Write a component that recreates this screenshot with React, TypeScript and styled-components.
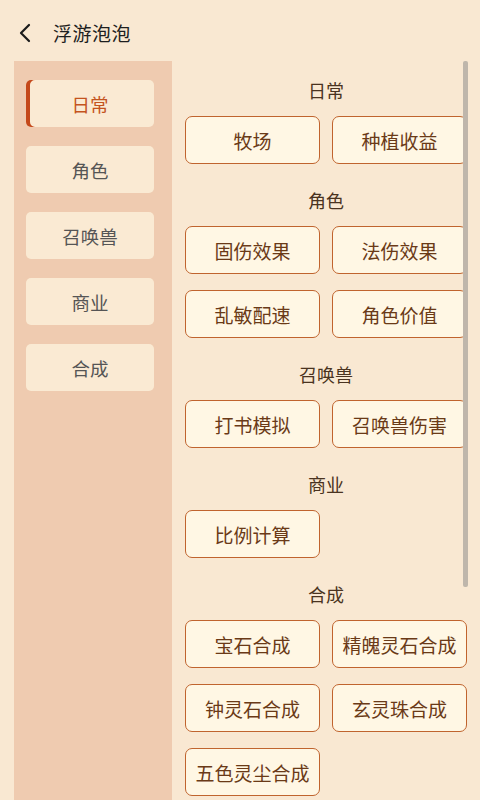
import React from "react";
import styled, { createGlobalStyle } from "styled-components";

const GlobalStyle = createGlobalStyle`
  html, body {
    margin: 0;
    padding: 0;
    background: #f9e8d2;
  }
  body {
    font-family: "Noto Sans CJK SC", "Noto Sans", sans-serif;
  }
`;

type Section = { title: string; items: string[] };

const sections: Section[] = [
  { title: "日常", items: ["牧场", "种植收益"] },
  { title: "角色", items: ["固伤效果", "法伤效果", "乱敏配速", "角色价值"] },
  { title: "召唤兽", items: ["打书模拟", "召唤兽伤害"] },
  { title: "商业", items: ["比例计算"] },
  {
    title: "合成",
    items: ["宝石合成", "精魄灵石合成", "钟灵石合成", "玄灵珠合成", "五色灵尘合成"],
  },
];

function App() {
  const [active, setActive] = React.useState(0);

  return (
    <Page>
      <GlobalStyle />
      <Header>
        <BackButton aria-label="返回">
          <svg width="14" height="20" viewBox="0 0 14 20">
            <path
              d="M11 2 L3 10 L11 18"
              fill="none"
              stroke="#1a1a1a"
              strokeWidth="2.2"
              strokeLinecap="round"
              strokeLinejoin="round"
            />
          </svg>
        </BackButton>
        <Title>浮游泡泡</Title>
      </Header>
      <Body>
        <Sidebar>
          {sections.map((s, i) => (
            <NavItem key={s.title} $active={i === active} onClick={() => setActive(i)}>
              {s.title}
            </NavItem>
          ))}
        </Sidebar>
        <Content>
          {sections.map((s) => (
            <SectionBlock key={s.title}>
              <SectionTitle>{s.title}</SectionTitle>
              <Grid>
                {s.items.map((item) => (
                  <ToolButton key={item}>{item}</ToolButton>
                ))}
              </Grid>
            </SectionBlock>
          ))}
          <ScrollThumb />
        </Content>
      </Body>
    </Page>
  );
}

const Page = styled.div`
  width: 480px;
  height: 800px;
  overflow: hidden;
  display: flex;
  flex-direction: column;
  background: #f9e8d2;
`;

const Header = styled.div`
  height: 61px;
  flex-shrink: 0;
  display: flex;
  align-items: center;
  padding: 0 0 0 18px;
  box-sizing: border-box;
`;

const BackButton = styled.button`
  border: none;
  background: none;
  padding: 0;
  width: 16px;
  height: 22px;
  display: flex;
  align-items: center;
  margin-top: 5px;
  cursor: pointer;
`;

const Title = styled.div`
  margin-left: 19px;
  margin-top: 4px;
  font-size: 19px;
  color: #1e1e1e;
  letter-spacing: 0.5px;
`;

const Body = styled.div`
  flex: 1;
  display: flex;
  padding-left: 14px;
  min-height: 0;
`;

const Sidebar = styled.div`
  width: 158px;
  flex-shrink: 0;
  background: #efcbb0;
  box-sizing: border-box;
  padding: 19px 18px 0 12px;
  display: flex;
  flex-direction: column;
  gap: 19px;
`;

const NavItem = styled.div<{ $active: boolean }>`
  height: 47px;
  border-radius: 5px;
  background: #faead3;
  display: flex;
  align-items: center;
  justify-content: center;
  font-size: 18.5px;
  color: ${(p) => (p.$active ? "#c4541e" : "#555555")};
  box-shadow: ${(p) => (p.$active ? "inset 4px 0 0 #c4481a" : "none")};
  cursor: pointer;
`;

const Content = styled.div`
  position: relative;
  flex: 1;
  padding: 19px 13px 0 13px;
  display: flex;
  flex-direction: column;
  gap: 26px;
`;

const SectionBlock = styled.div`
  display: flex;
  flex-direction: column;
  gap: 16px;
`;

const SectionTitle = styled.div`
  height: 20px;
  line-height: 20px;
  text-align: center;
  font-size: 18px;
  color: #4a3320;
`;

const Grid = styled.div`
  display: grid;
  grid-template-columns: 1fr 1fr;
  column-gap: 12px;
  row-gap: 16px;
`;

const ToolButton = styled.button`
  height: 48px;
  border: 1.5px solid #c0642e;
  border-radius: 7px;
  background: #fff7e4;
  color: #6a3a17;
  font-family: "Noto Sans CJK SC", "Noto Sans", sans-serif;
  font-size: 19px;
  padding: 0;
  cursor: pointer;
`;

const ScrollThumb = styled.div`
  position: absolute;
  top: 0;
  right: 12px;
  width: 5px;
  height: 526px;
  border-radius: 2px;
  background: #bfb6ab;
`;

export default App;
